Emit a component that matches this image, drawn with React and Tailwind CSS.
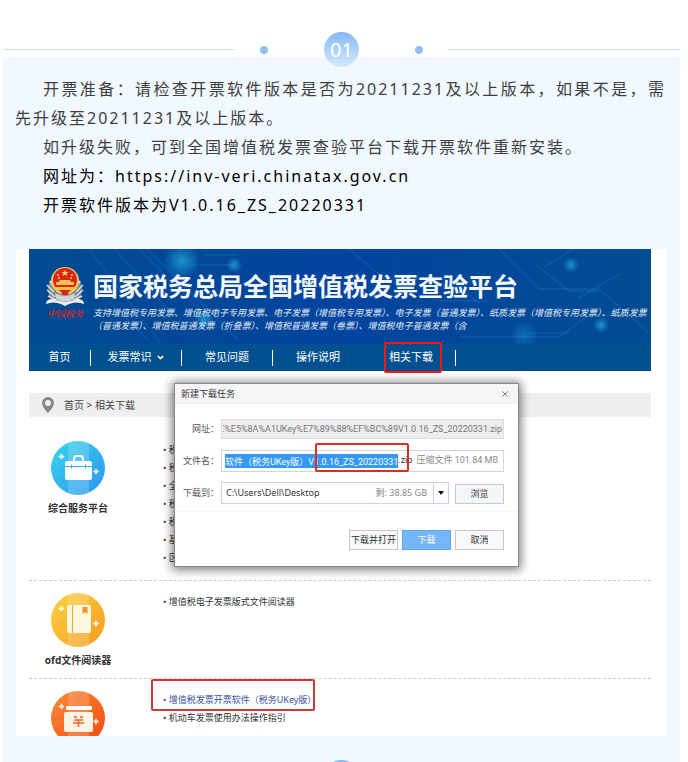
import { ChevronDown, X } from "lucide-react"

const navItems = ["发票常识", "常见问题", "操作说明"]

const serviceLinks = ["税", "税", "全", "税", "税", "基", "区"]

// long values show their tail, like a field with the caret at the end
const scrollToEnd = (el) => {
    if (el) el.scrollLeft = el.scrollWidth
}

function Divider() {
    return (
        <div className="flex items-center h-[35px]">
            <span className="flex-1 h-px bg-[#cfe2f7]" />
            <span className="w-2 h-2 rounded-full bg-[#92bfef] ml-[25px]" />
            <span className="w-[35px] h-[35px] mx-14 rounded-full bg-linear-to-b from-[#83b8f3] to-[#d5ebfd] text-white text-xl flex items-center justify-center">01</span>
            <span className="w-2 h-2 rounded-full bg-[#92bfef] mr-[25px]" />
            <span className="flex-1 h-px bg-[#cfe2f7]" />
        </div>
    )
}

function Emblem() {
    return (
        <svg viewBox="0 0 40 42" className="w-10 h-[42px]">
            <path d="M5 14 Q0 28 9 37 L20 33 L31 37 Q40 28 35 14 L31 25 Q20 33 9 25Z" fill="#7f878e" />
            <path d="M5 15l4 6M2 19l7 7M2 24l8 7M3 30l8 4M35 15l-4 6M38 19l-7 7M38 24l-8 7M37 30l-8 4" stroke="#dfe3e2" strokeWidth="1.500" />
            <path d="M8 33 Q1 33 1 38 Q10 34 20 40 Q30 34 39 38 Q39 33 32 33 Q20 38 8 33Z" fill="#eceeed" />
            <path d="M10 27 Q20 33 30 27 L29 33 Q20 38 11 33Z" fill="#cfd3d3" />
            <circle cx="20" cy="15" r="14" fill="#edcb62" />
            <circle cx="20" cy="14" r="12" fill="#e0231a" />
            <path d="M20 4l1 2h2.500l-2 1.500 1 2.500-2.500-1.500-2.500 1.500 1-2.500-2-1.500h2.500z" fill="#f8dc62" />
            <circle cx="13" cy="9" r="1" fill="#f8dc62" />
            <circle cx="27" cy="9" r="1" fill="#f8dc62" />
            <circle cx="14" cy="12" r="1" fill="#f8dc62" />
            <circle cx="26" cy="12" r="1" fill="#f8dc62" />
            <path d="M15 14h10l1 2h3v3H11v-3h3zM9 21h22l-2 3H11z" fill="#f0c24c" />
            <path d="M16 25h8l-1 4h-6z" fill="#d9271c" />
        </svg>
    )
}

function Circuit() {
    return (
        <svg viewBox="0 0 622 95" preserveAspectRatio="none" className="absolute inset-0 w-full h-[95px]" fill="none">
            <defs>
                <radialGradient id="glow">
                    <stop offset="0" stopColor="#22a5dc" stopOpacity=".8" />
                    <stop offset="1" stopColor="#22a5dc" stopOpacity="0" />
                </radialGradient>
            </defs>
            <path d="M60 0l72 95M86 0l52 60M105 -5L190 80M118 0L210 92M120 92L80 52" stroke="#1767b8" strokeWidth="2" opacity=".35" />
            <path d="M158 16h47M175 6h34M320 0l35 30h65l30 24M470 0l40 40h60l50 44M505 14l35 28h30M545 0l-30 18M430 88h100l30-22h35M590 25l-40 24M500 84h40M410 52h48" stroke="#2582cc" opacity=".45" />
            <circle cx="153" cy="12" r="18" fill="url(#glow)" />
            <circle cx="205" cy="16" r="8" fill="url(#glow)" />
            <circle cx="175" cy="71" r="10" fill="url(#glow)" />
            <circle cx="542" cy="16" r="8" fill="url(#glow)" />
            <circle cx="572" cy="76" r="8" fill="url(#glow)" />
            <circle cx="495" cy="86" r="14" fill="url(#glow)" opacity=".5" />
        </svg>
    )
}

function Disc({ from, to, id, children }) {
    return (
        <svg viewBox="0 0 54 54" className="w-[54px] h-[54px] shrink-0">
            <defs>
                <linearGradient id={id} x1="0" y1="0" x2="1" y2="1">
                    <stop offset="0" stopColor={from} />
                    <stop offset="1" stopColor={to} />
                </linearGradient>
            </defs>
            <circle cx="27" cy="27" r="27" fill={`url(#${id})`} />
            <path d="M17 2 Q27 -2 38 2 V52 Q27 56 17 52Z" fill="#fff" opacity=".18" />
            <path d="M10.500 13.500v4M8.500 15.500h4M45 28.500v4M43 30.500h4" stroke="#fff" strokeWidth="1.800" strokeLinecap="round" opacity=".85" />
            {children}
        </svg>
    )
}

function Row({ label, htmlFor, children }) {
    return (
        <div className="flex items-center h-[22px]">
            <label htmlFor={htmlFor} className="w-10 shrink-0 mr-[2px] text-right whitespace-nowrap text-[#555]">{label}</label>
            {children}
        </div>
    )
}

function DownloadDialog() {
    return (
        <section className="absolute left-[158px] top-[134px] w-[345px] h-[184px] bg-white border border-[#888] text-[9px] text-[#333] shadow-[0_1px_9px_2px_rgba(0,0,0,0.5)]">
            <header className="h-5 px-[6px] flex items-center justify-between bg-[#f6f6f8] border-b border-[#eee]">
                <h2>新建下载任务</h2>
                <button aria-label="关闭" className="pr-[2px]"><X size={10} color="#666" strokeWidth={2} /></button>
            </header>
            <div className="pl-1 pr-[14px] pt-[14px] flex flex-col gap-[10px]">
                <Row label="网址：" htmlFor="url">
                    <input id="url" readOnly ref={scrollToEnd} defaultValue="3E%E5%8A%A1UKey%E7%89%88%EF%BC%89V1.0.16_ZS_20220331.zip" className="flex-1 min-w-0 h-5 px-px bg-[#eee] border border-[#ddd] text-[#777] font-['Roboto',sans-serif]" />
                </Row>
                <Row label="文件名：" htmlFor="filename">
                    <div className="relative flex-1 min-w-0 h-[22px] px-[3px] border border-[#ccd6dc] flex items-center whitespace-nowrap font-['Roboto','Noto_Sans_CJK_SC',sans-serif]">
                        <input id="filename" readOnly ref={scrollToEnd} defaultValue="票开票软件（税务UKey版）V1.0.16_ZS_20220331" className="flex-1 min-w-0 h-[14px] bg-[#3399f5] text-white" />
                        <span>.zip</span>
                        <span className="ml-1 mr-[2px] text-[#888]">压缩文件 101.84 MB</span>
                        <span className="absolute left-[93px] -top-2 w-[94px] h-[29px] border-2 border-[#d92f27] rounded-xs" />
                    </div>
                </Row>
                <Row label="下载到：" htmlFor="folder">
                    <div className="flex-1 min-w-0 h-[22px] border border-[#c5d6df] flex items-center">
                        <input id="folder" readOnly defaultValue="C:\Users\Dell\Desktop" className="pl-1 flex-1 min-w-0" />
                        <span className="text-[#888] pr-[6px]">剩: 38.85 GB</span>
                        <button aria-label="选择目录" className="w-[15px] h-full border-l border-[#c5d6df] flex items-center justify-center">
                            <svg viewBox="0 0 6 4" className="w-[6px] h-1"><path d="M0 0h6L3 4z" fill="#111" /></svg>
                        </button>
                    </div>
                    <button className="ml-[6px] w-[49px] h-5 self-end bg-[#f5f6f8] border border-[#c5c9cf]">浏览</button>
                </Row>
            </div>
            <footer className="mt-[7px] pt-[18px] pr-[14px] border-t border-[#f6f6f6] flex justify-end gap-1">
                <button className="w-[49px] h-5 bg-[#f8f9fa] border border-[#c5c9cf] whitespace-nowrap">下载并打开</button>
                <button className="w-[49px] h-5 bg-[#75b6fa] border border-[#62a6ee] text-white">下载</button>
                <button className="w-[49px] h-5 bg-[#f8f9fa] border border-[#c5c9cf]">取消</button>
            </footer>
        </section>
    )
}

export default function App() {
    return (
        <main className="bg-white pl-[3px] pr-2 pt-8 font-['Noto_Sans','Noto_Sans_CJK_SC',sans-serif]">
            <div className="relative z-10 -mb-[10px]"><Divider /></div>
            <article className="bg-[#f1f8ff] pt-[18px]">
                <div className="pl-3 pr-[14px] text-base leading-[29px] tracking-[2px] text-justify text-[#3e3e3e]">
                    <p className="indent-7">开票准备：请检查开票软件版本是否为20211231及以上版本，如果不是，需先升级至20211231及以上版本。</p>
                    <p className="indent-7">如升级失败，可到全国增值税发票查验平台下载开票软件重新安装。</p>
                    <p className="indent-7 text-black">网址为：https://inv-veri.chinatax.gov.cn</p>
                    <p className="indent-7 text-black">开票软件版本为V1.0.16_ZS_20220331</p>
                </div>

                <div className="relative mt-[29px] mx-[13px] pl-[13px] pr-4 bg-white text-[9px] text-[#333]">
                    <header className="bg-linear-to-r from-[#024a90] via-[#03449f] to-[#024c92] text-white relative">
                        <Circuit />
                        <div className="relative h-[95px] pl-4 pt-[17px] flex">
                            <div className="w-12 shrink-0">
                                <Emblem />
                                <p className="pl-[2px] text-[9px] leading-3 font-bold italic text-[#d0282c] font-['Noto_Serif_CJK_SC','Noto_Sans_CJK_SC',serif]">中国税务</p>
                            </div>
                            <div className="min-w-0">
                                <h1 className="text-[25px] leading-10 font-bold whitespace-nowrap text-[#f4f7fb]">国家税务总局全国增值税发票查验平台</h1>
                                <p className="text-[9px] leading-[13px] italic text-[#e3ebf5]">支持增值税专用发票、增值税电子专用发票、电子发票（增值税专用发票）、电子发票（普通发票）、纸质发票（增值税专用发票）、纸质发票（普通发票）、增值税普通发票（折叠票）、增值税普通发票（卷票）、增值税电子普通发票（含</p>
                            </div>
                        </div>
                        <nav className="relative h-[27px] bg-[#02508f] flex items-center text-[11px]">
                            <a href="#" className="w-[61px] text-center">首页</a>
                            {navItems.map((item, i) => (
                                <a key={item} href="#" className="w-[91px] h-4 border-l border-white flex items-center justify-center gap-1">
                                    {item}
                                    {i === 0 && <ChevronDown size={9} strokeWidth={4} />}
                                </a>
                            ))}
                            <a href="#" className="ml-[21px] w-[58px] h-[31px] pr-1 border-2 border-[#f4190f] rounded-xs flex items-center justify-center whitespace-nowrap">相关下载</a>
                            <span className="ml-[13px] h-4 w-px bg-white" />
                        </nav>
                    </header>

                    <div className="mt-[22px] h-6 bg-[#efefef] pl-[13px] flex items-center gap-[10px] text-[10px] text-[#444]">
                        <svg viewBox="0 0 12 16" className="w-3 h-4"><path d="M6 0a6 6 0 0 0-6 6c0 4 6 10 6 10s6-6 6-10a6 6 0 0 0-6-6zm0 3a3 3 0 1 1 0 6 3 3 0 0 1 0-6z" fill="#888" fillRule="evenodd" /></svg>
                        <span>首页 &gt; 相关下载</span>
                    </div>

                    <section className="h-[164px] pt-6 flex border-b border-dashed border-[#ccc]">
                        <div className="w-[98px] flex flex-col items-center gap-[5px]">
                            <Disc id="cyan" from="#36d6ea" to="#2f94f3">
                                <path d="M23 20v-2q0-3 3-3h3q3 0 3 3v2" fill="none" stroke="#fff" strokeWidth="2" />
                                <rect x="14" y="20" width="27" height="19" rx="2" fill="#fff" />
                                <path d="M14 25.500h27M20.500 23.500v4M34.500 23.500v4" stroke="#3caeea" strokeWidth="1.200" />
                            </Disc>
                            <h3 className="text-[10px] leading-4 font-bold">综合服务平台</h3>
                        </div>
                        <ul className="ml-9 leading-[18px]">
                            {serviceLinks.map((item, i) => <li key={i}>• {item}</li>)}
                        </ul>
                    </section>

                    <section className="h-[98px] pt-3 flex border-b border-dashed border-[#ccc]">
                        <div className="w-[98px] flex flex-col items-center gap-[5px]">
                            <Disc id="amber" from="#fbd33f" to="#f69a24">
                                <rect x="16" y="12" width="24" height="28" rx="2" fill="#fff8dc" />
                                <path d="M21.500 12v28" stroke="#f2aa3a" />
                                <path d="M31.500 14h5v7l-2.500-2-2.500 2z" fill="#f08d2d" />
                            </Disc>
                            <h3 className="text-[10px] leading-4 font-bold">ofd文件阅读器</h3>
                        </div>
                        <ul className="ml-9 leading-[18px]">
                            <li>• <a href="#">增值税电子发票版式文件阅读器</a></li>
                        </ul>
                    </section>

                    <section className="h-[57px] pt-3 flex overflow-hidden">
                        <div className="w-[98px] flex flex-col items-center">
                            <Disc id="orange" from="#fb8a35" to="#f44a10">
                                <rect x="15" y="15" width="26" height="4" rx="1" fill="#fff" />
                                <rect x="13" y="21" width="29" height="20" rx="2" fill="#fff3e6" />
                                <path d="M23 26h3M29 26h3M23 29h9M22 32h11M27.500 29v7" stroke="#e56a2c" strokeWidth="1.500" />
                            </Disc>
                        </div>
                        <ul className="ml-9 leading-[18px]">
                            <li className="relative text-[#3a4fa0]">
                                • <a href="#">增值税发票开票软件（税务UKey版）</a>
                                <span className="absolute -left-3 -top-3 w-[164px] h-8 border-2 border-[#c93a3a] rounded-xs" />
                            </li>
                            <li>• <a href="#">机动车发票使用办法操作指引</a></li>
                        </ul>
                    </section>

                    <DownloadDialog />
                </div>

                <div className="mt-6 h-[2px] overflow-hidden flex justify-center">
                    <span className="w-[35px] h-[35px] shrink-0 rounded-full bg-[#83b8f3]" />
                </div>
            </article>
        </main>
    )
}
